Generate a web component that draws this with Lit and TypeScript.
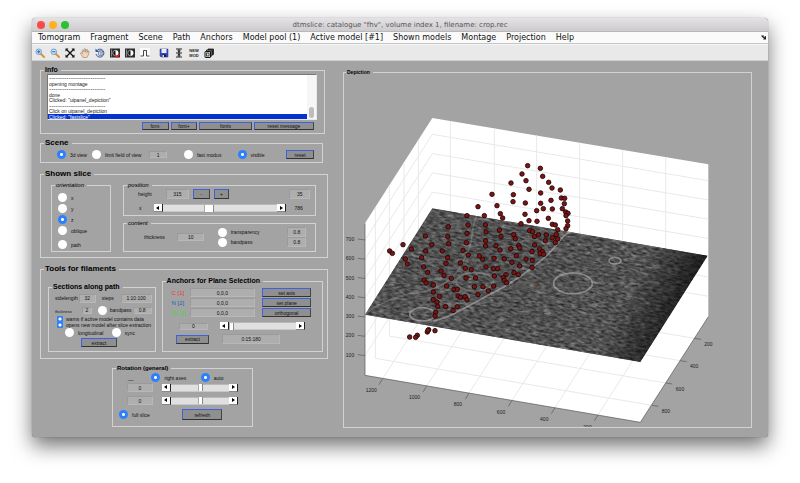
import { LitElement, html, css, svg } from "lit";
import { customElement, property } from "lit/decorators.js";
import { classMap } from "lit/directives/class-map.js";

/* Plot coordinates: three units to one pixel at the default window width. */
const POINTS: number[][] = [
  [578, 317], [616, 325], [561, 342], [623, 349], [573, 362], [641, 367], [528, 369], [651, 384],
  [676, 390], [582, 388], [617, 399], [471, 403], [535, 404], [679, 414], [689, 415], [648, 421],
  [534, 425], [571, 429], [617, 430], [688, 431], [429, 440], [486, 437], [625, 446], [652, 447],
  [682, 446], [605, 452], [570, 463], [692, 456], [699, 460], [693, 467], [396, 467], [448, 467],
  [496, 461], [503, 474], [640, 475], [582, 482], [606, 484], [698, 483], [558, 491], [652, 493],
  [661, 495], [698, 497], [399, 495], [451, 495], [693, 506], [668, 509], [340, 500], [493, 510],
  [453, 516], [396, 520], [584, 512], [593, 515], [271, 528], [338, 529], [498, 529], [536, 524],
  [541, 536], [610, 525], [598, 530], [634, 525], [664, 524], [652, 533], [668, 537], [290, 554],
  [341, 551], [394, 548], [452, 543], [452, 558], [483, 557], [551, 557], [554, 563], [527, 566],
  [495, 570], [599, 555], [631, 542], [661, 548], [204, 554], [229, 567], [272, 573], [322, 573],
  [384, 571], [400, 585], [433, 588], [443, 598], [164, 573], [172, 580], [211, 597], [217, 612],
  [260, 593], [338, 593], [333, 610], [376, 609], [391, 625], [409, 629], [453, 621], [477, 595],
  [508, 597], [544, 587], [591, 575], [614, 567], [622, 575], [615, 581], [626, 583], [573, 597],
  [592, 602], [531, 607], [554, 618], [591, 622], [475, 626], [488, 626], [537, 638], [550, 644],
  [513, 644], [478, 648], [505, 653], [508, 661], [515, 668], [266, 621], [278, 637], [318, 633],
  [327, 646], [349, 655], [393, 654], [422, 654], [267, 660], [273, 669], [295, 675], [335, 678],
  [357, 688], [367, 688], [418, 680], [444, 680], [476, 678], [460, 693], [429, 704], [295, 696],
  [313, 709], [295, 719], [306, 726], [308, 739], [332, 740], [369, 708], [376, 712], [390, 710],
  [396, 719], [367, 740], [354, 752], [302, 757], [300, 768], [300, 812], [281, 809], [277, 816],
  [279, 811], [247, 826], [242, 832], [224, 831],
];

const MENUS = [
  "Tomogram", "Fragment", "Scene", "Path", "Anchors", "Model pool (1)", "Active model [#1]",
  "Shown models", "Montage", "Projection", "Help",
];

const DASHES = "-".repeat(26);
const LOG = [
  DASHES, "opening montage", DASHES, "done", 'Clicked: "uipanel_depiction"', DASHES,
  "Click on uipanel_depiction", 'Clicked: "fastslice"',
];

const controls = css`
  * { box-sizing: border-box; }
  button, input, output { font: inherit; color: inherit; margin: 0; padding: 0; border-radius: 0; }
  button { display: grid; place-items: center; white-space: nowrap; }
`;

@customElement("scroll-slider")
class ScrollSlider extends LitElement {
  @property() label = "";
  @property({ type: Number }) value = 0;
  @property({ type: Boolean }) wide = false;

  static styles = [controls, css`
    :host { display: flex; height: 8px; min-width: 0; }
    button {
      width: 9px; flex: none; background: #fff; border: 0;
      border-right: 1px solid #222; border-bottom: 1px solid #888;
    }
    svg { width: 4px; height: 4px; display: block; }
    input {
      appearance: none; flex: 1; width: 0; min-width: 0; height: 8px; background: #e0e0e0;
      border-top: 1px solid #b8b8b8; border-bottom: 1px solid #c8c8c8;
    }
    input::-webkit-slider-thumb {
      appearance: none; width: 5px; height: 7px; background: #fff;
      border-left: 1px solid #aaa; border-right: 1px solid #888;
    }
    .wide::-webkit-slider-thumb { width: 10px; }
  `];

  render() {
    return html`
      <button aria-label="Decrease ${this.label}"><svg viewBox="0 0 4 4"><path d="M3 0v4L0 2z" /></svg></button>
      <input type="range" class=${classMap({ wide: this.wide })} aria-label=${this.label} .value=${String(this.value)} />
      <button aria-label="Increase ${this.label}"><svg viewBox="0 0 4 4"><path d="M1 0v4l3-2z" /></svg></button>`;
  }
}

@customElement("slice-plot")
class SlicePlot extends LitElement {
  static styles = css`
    :host { display: block; }
    svg { display: block; width: 100%; height: auto; overflow: hidden; }
    .wall { fill: #fff; }
    .grid { stroke: #e9e9e9; stroke-width: 3; fill: none; }
    .axis { stroke: #555; stroke-width: 2; fill: none; }
    .label { font: 15px "Liberation Sans", Arial, sans-serif; fill: #222; text-anchor: middle; }
    .dot { fill: #7c1414; stroke: #1c0606; stroke-width: 2.5; }
    .membrane { stroke: #bbb; fill: none; stroke-width: 5; opacity: 0.55; }
    .faint { opacity: 0.28; }
    .pick { stroke: #c03a20; stroke-width: 2; fill: none; }
  `;

  private line(x1: number, y1: number, x2: number, y2: number, cls: string) {
    return svg`<line class=${cls} x1=${x1} y1=${y1} x2=${x2} y2=${y2} />`;
  }

  render() {
    const levels = [0, 1, 2, 3, 4, 5, 6].map((i) => i * 57.8);
    const xs = [346, 478, 605, 734, 863, 992];
    const depth = [[250, 1078, 835], [207, 1035, 902], [163, 992, 969], [121, 950, 1036]];
    const floorLabels = ["1200", "1000", "800", "600", "400", "200"];
    const depthLabels = ["200", "400", "600", "800"];
    return html`
      <svg viewBox="27 48 1221 1053" role="img" aria-label="Depiction">
        <defs>
          <clipPath id="slice"><path d="M292 445L1118 587 916 906 90 764z" /></clipPath>
          <filter id="grain" x="0" y="0" width="1" height="1" color-interpolation-filters="sRGB">
            <feTurbulence type="fractalNoise" baseFrequency="0.06 0.17" numOctaves="3" seed="7" />
            <feColorMatrix values="0.55 0 0 0 0.04  0.55 0 0 0 0.04  0.55 0 0 0 0.04  0 0 0 0 1" />
          </filter>
          <filter id="flecks" x="0" y="0" width="1" height="1" color-interpolation-filters="sRGB">
            <feTurbulence type="fractalNoise" baseFrequency="0.03 0.07" numOctaves="3" seed="21" />
            <feColorMatrix values="0 0 0 0 0.75  0 0 0 0 0.75  0 0 0 0 0.75  4 0 0 0 -2.45" />
          </filter>
          <linearGradient id="shade" gradientUnits="userSpaceOnUse" x1="890" y1="675" x2="1035" y2="750">
            <stop offset="0" stop-opacity="0" />
            <stop offset="1" stop-opacity="0.65" />
          </linearGradient>
        </defs>
        <path class="wall" d="M90 490L292 174 1120 313V770L916 1087 90 946z" />
        ${levels.map((d) => svg`<path class="grid" d="M90 ${540 + d}L292 ${223 + d} 1120 ${362 + d}" />`)}
        ${xs.map((x) => {
          const y = 174 + (x - 292) * 0.168;
          return svg`<path class="grid" d="M${x} ${y}V${y + 456}L${x - 203} ${y + 773}" />`;
        })}
        ${depth.map(([x, rx, ry]) => svg`<path class="grid" d="M${x} ${174 + (292 - x) * 1.565}V${ry + (x - rx) * 0.17}L${rx} ${ry}" />`)}
        <path class="axis" d="M90 490V946L916 1087 1120 770" />
        ${levels.map((d) => this.line(68, 537 + d, 90, 540 + d, "axis"))}
        ${levels.map((d, i) => svg`<text class="label" x="45" y=${543 + d}>${700 - i * 100}</text>`)}
        ${xs.map((x) => {
          const y = 947 + (x - 292) * 0.168;
          return this.line(x - 203, y, x - 214, y + 18, "axis");
        })}
        ${floorLabels.map((t, i) => svg`<text class="label" x=${109 + i * 129.7} y=${995 + i * 22.2}>${t}</text>`)}
        ${depth.map(([, x, y]) => this.line(x, y, x + 20, y + 3, "axis"))}
        ${depthLabels.map((t, i) => svg`<text class="label" x=${1120 - i * 42.5} y=${858 + i * 67}>${t}</text>`)}

        <g clip-path="url(#slice)">
          <path d="M292 445L1118 587 916 906 90 764z" fill="#555" />
          <g transform="rotate(9.7 600 675)">
            <rect x="100" y="400" width="1050" height="560" filter="url(#grain)" />
            <rect x="100" y="400" width="1050" height="560" filter="url(#flecks)" opacity="0.5" />
          </g>
          <path d="M292 445L1118 587 916 906 90 764z" fill="url(#shade)" />
          <path class="membrane" d="M295 783C360 768 420 724 490 690C560 652 640 590 668 550C690 520 704 513 725 512" />
          <path class="membrane faint" d="M96 755C130 735 170 712 220 702C290 696 340 675 370 630C392 590 410 560 412 520Q414 490 428 462" />
          <path class="membrane faint" d="M560 545C590 525 620 535 645 575" />
          <ellipse class="membrane" cx="262" cy="763" rx="38" ry="20" />
          <ellipse class="membrane" cx="714" cy="670" rx="58" ry="31" />
          <ellipse class="membrane" cx="840" cy="602" rx="18" ry="10" fill="#999" />
          <ellipse class="membrane faint" cx="355" cy="711" rx="48" ry="22" />
          <ellipse class="membrane faint" cx="420" cy="665" rx="56" ry="27" />
        </g>
        <path class="pick" d="M600 676v-5h6v5" />
        ${POINTS.map(([x, y]) => svg`<circle class="dot" cx=${x} cy=${y} r="6.8" />`)}
      </svg>`;
  }
}

const icon = (body: unknown) => svg`<svg class="icon" viewBox="0 0 20 20" aria-hidden="true">${body}</svg>`;

const lens = (plus: boolean) => icon(svg`
  <path d="M11 11l7 7" stroke="#d9933c" stroke-width="4" stroke-linecap="round" />
  <circle cx="7.500" cy="7.500" r="5.500" fill="#cfe6fb" stroke="#6f9fd0" stroke-width="2" />
  <path d=${plus ? "M4.500 7.500h6M7.500 4.500v6" : "M4.500 7.500h6"} stroke="#235b9c" stroke-width="2" />`);

const contrast = (red: boolean) => icon(svg`
  <rect x="0" y="1" width="20" height="18" fill="#2b2b2b" />
  <circle cx="11" cy="10" r="5.500" fill="#111" stroke="#bbb" stroke-width="1.500" />
  <path d="M11 4.500a5.500 5.500 0 0 1 0 11z" fill="#fff" />
  <path d="M3 3v14" stroke="#aaa" stroke-width="1.500" />
  ${red ? svg`<path d="M10 14l4 4 5-6" stroke="#d22" stroke-width="3" fill="none" />` : ""}`);

const TOOLS: [string, unknown][] = [
  ["Zoom in", lens(true)],
  ["Zoom out", lens(false)],
  ["Fit view", icon(svg`<path d="M3 3l14 14M17 3L3 17" stroke="#111" stroke-width="2.500" /><path d="M1 1h6L1 7zM19 1v6l-6-6zM1 19v-6l6 6zM19 19h-6l6-6z" fill="#111" />`)],
  ["Pan", icon(svg`<path d="M6 19C4 15 1 12 1 10q2-2 4 1L4 5q1-2 3 0l1 3V2q2-2 3 0v6l2-5q2-1 2 1l-1 5 2-3q3-1 2 2-1 7-4 11z" fill="#f5d3ac" stroke="#8e7d77" stroke-width="1.200" />`)],
  ["Rotate", icon(svg`<path d="M3 6a8 8 0 1 1-1 6" fill="none" stroke="#3c5a94" stroke-width="2" /><path d="M1 1v7h7z" fill="#3c5a94" /><path d="M7 6l5-2 4 3v6l-4 3-5-2zM7 6l5 2 4-1M12 8v8" fill="#cdd8ec" stroke="#54698f" stroke-width="1.300" />`)],
  ["Contrast pick", contrast(true)],
  ["Contrast", contrast(false)],
  ["Filter", icon(svg`<rect width="20" height="20" fill="#fafafa" /><path d="M1 16h6V5h6v11h6" fill="none" stroke="#333" stroke-width="1.800" />`)],
  ["Save", icon(svg`<path d="M2 2h16v16H4l-2-2z" fill="#3a49b8" stroke="#24307f" /><rect x="5" y="2" width="10" height="8" fill="#e8ecff" /><rect x="6" y="13" width="8" height="5" fill="#11194e" /><rect x="7" y="14" width="3" height="4" fill="#dde" />`)],
  ["Align", icon(svg`<path d="M4 2h12M4 10h12M4 18h12" stroke="#222" stroke-width="2" /><path d="M10 9L6 5h8zM10 11l-4 4h8z" fill="#222" /><path d="M10 2v16" stroke="#222" stroke-width="2" />`)],
  ["New model", html`<span class="newmod">NEW<br />MOD</span>`],
  ["Layers", icon(svg`<path d="M8 2h11v11h-3V5H8z" fill="#444" stroke="#111" stroke-width="1.500" /><path d="M5 4h11v12h-3V7H5z" fill="#888" stroke="#111" stroke-width="1.500" /><rect x="2" y="7" width="11" height="12" rx="1" fill="#eee" stroke="#111" stroke-width="2" /><rect x="5" y="10" width="5" height="6" fill="#ddd" stroke="#222" stroke-width="1.500" />`)],
];

@customElement("app-root")
class AppRoot extends LitElement {
  static styles = [controls, css`
    :host {
      display: block; padding: 18px 32px 47px; background: #fff; color: #111; overflow: hidden;
      font: 5px/6px "Liberation Sans", Arial, sans-serif;
    }
    .window {
      background: #a3a3a3; border-radius: 4px 4px 3px 3px;
      box-shadow: 0 9px 20px rgba(0, 0, 0, 0.55), 0 0 1px rgba(0, 0, 0, 0.5);
    }
    .titlebar {
      height: 14px; display: grid; grid-template-columns: 1fr auto 1fr; align-items: center;
      padding: 0 5px; border-radius: 4px 4px 0 0;
      background: linear-gradient(#e4e2e4, #cdcbcd); border-bottom: 1px solid #b8b8b8;
    }
    .lights { display: flex; gap: 4px; }
    .light { width: 8px; height: 8px; border-radius: 50%; border: 0; }
    .red { background: #fc4a48; }
    .amber { background: #fdb124; }
    .green { background: #29c231; }
    .title { margin: 0; font: 7px/12px "DejaVu Sans", sans-serif; color: #555; }
    .menubar {
      display: flex; align-items: center; gap: 10px; height: 12px; padding: 0 2px 0 6px;
      background: #fafafa; border-bottom: 1px solid #c4c4c4;
      font: 8px/11px "DejaVu Sans", sans-serif; color: #111; white-space: nowrap;
    }
    .menu { border: 0; background: none; }
    .dock { border: 0; background: none; width: 5px; margin-left: auto; }
    .dock svg { display: block; width: 5px; height: 5px; }
    .toolbar {
      display: flex; gap: 5px; align-items: center; height: 17px; padding: 0 3px;
      background: #e9e9e9; border-top: 1px solid #f6f6f6; border-bottom: 1px solid #cfcfcf;
    }
    .tool { width: 10px; height: 10px; border: 0; background: none; }
    .tool:nth-child(9) { margin-left: 4px; }
    .icon { display: block; width: 10px; height: 10px; }
    .newmod { font: bold 4px/5px "Liberation Sans", Arial, sans-serif; color: #222; }

    .body {
      display: grid; grid-template-columns: minmax(0, 288fr) minmax(0, 409fr); gap: 15px;
      padding: 5px 16px 9px 8px;
    }
    fieldset { margin: 0; padding: 0; min-width: 0; border: 1px solid #d2d2d2; }
    legend { margin-left: 3px; padding: 0 3px 0 1px; font: bold 8px/8px "Liberation Sans", Arial, sans-serif; color: #000; }
    .mid > legend { font-size: 7px; }
    .small > legend { font-size: 6px; }
    .tiny > legend { font: bold 5px/7px "Liberation Sans", Arial, sans-serif; margin-left: 2px; }
    .italic > legend { font: italic 6px/6px "Liberation Sans", Arial, sans-serif; }

    .btn {
      height: 9px; background: #8f8f8f; color: #111; line-height: 6px;
      border: 1px solid; border-color: #3d62dc #444 #333 #3d62dc;
    }
    .field {
      display: block; width: 100%; height: 9px; min-width: 0; text-align: center;
      background: #aeaeae; border: 1px solid #999; border-color: #9a9a9a #b8b8b8 #b8b8b8 #9a9a9a;
    }
    .low { height: 7px; }
    .opt { display: flex; align-items: center; gap: 4px; white-space: nowrap; }
    .opt input {
      appearance: none; flex: none; width: 9px; height: 9px; border-radius: 50%; background: #fff;
    }
    .opt input:checked { background: radial-gradient(circle, #fff 1px, #2a80ff 2px); }
    .check { gap: 3px; }
    .check input { width: 6px; height: 6px; border-radius: 1px; }

    .info { margin-right: 3px; }
    .logbox { display: flex; height: 46px; margin: 0 7px 0 6px; background: #fff; border: 1px solid #777; border-color: #777 #e8e8e8 #e8e8e8 #777; }
    .log { flex: 1; margin: 0; padding: 0; list-style: none; display: grid; grid-auto-rows: minmax(0, 1fr); color: #222; }
    .log li { padding-left: 1px; white-space: nowrap; }
    .log .rule { font: 6px/6px "DejaVu Sans", sans-serif; }
    .log .current { background: #0432cf; color: #fff; }
    .track { width: 9px; background: #f6f6f6; display: flex; align-items: flex-end; justify-content: center; padding-bottom: 1px; }
    .thumb { width: 5px; height: 11px; border-radius: 3px; background: #bdbdbd; }
    .buttons { display: grid; grid-template-columns: 27fr 26fr 53fr 60fr; gap: 2px; margin: 2px 10px 3px 101px; }
    .buttons .btn { height: 8px; }

    .scene { margin: 5px 5px 0 0; }
    .scene-row { display: grid; grid-template-columns: 34fr 55fr 18fr 16fr 52fr 47fr 27fr; align-items: center; height: 15px; margin: 0 8px 0 16px; }
    .scene-row > :nth-child(4) { grid-column: 5; }

    .shown { margin-top: 7px; }
    .shown-grid { display: grid; grid-template-columns: 60fr 193fr; column-gap: 12px; row-gap: 4px; padding: 4px 11px 5px 10px; }
    .orientation { grid-row: span 2; }
    .radios { display: grid; grid-auto-rows: 11px; align-items: center; padding: 4px 0 0 6px; }
    .radios .last { margin-top: 6px; }
    .position-grid { display: grid; grid-template-columns: 24fr 24fr 17fr 16fr 53fr 21fr; column-gap: 4px; align-items: center; padding: 1px 5px 0 14px; }
    .position-grid .field, .position-grid .btn { height: 10px; }
    .position-grid > :nth-child(5) { grid-column: 6; }
    .second { display: grid; grid-template-columns: 15fr 134fr 30fr; align-items: center; padding: 5px 0 3px 15px; }
    .second output { padding-left: 9px; }
    .content-grid { display: grid; grid-template-columns: 34fr 27fr 14fr 71fr 19fr 9fr; align-items: center; padding: 1px 0 4px 20px; }
    .content-grid .pair { grid-column: 4; display: grid; grid-auto-rows: 10px; align-items: center; }
    .content-grid .field { height: 10px; }
    .content-grid .low { height: 8px; }

    .tools { margin-top: 7px; }
    .tools-grid { display: grid; grid-template-columns: 108fr 162fr; gap: 6px; align-items: end; padding: 4px 4px 6px 7px; }
    .sections-body { display: grid; padding: 2px 3px 4px 6px; }
    .row-a { display: grid; grid-template-columns: 24fr 17fr 6fr 19fr 31fr; height: 10px; align-items: center; }
    .row-a > :nth-child(3) { grid-column: 4; }
    .row-b { display: grid; grid-template-columns: 27fr 10fr 6fr 35fr 19fr; height: 10px; align-items: center; margin: 2px 0 1px; }
    .row-b > :nth-child(3) { grid-column: 4; }
    .row-b .opt { gap: 3px; }
    .clip { font-size: 4px; padding-top: 3px; overflow: hidden; }
    .indent { padding-left: 2px; height: 6px; }
    .row-e { display: grid; grid-template-columns: 47fr 40fr; padding-left: 10px; height: 9px; }
    .sections .btn { width: 36px; height: 9px; margin: 1px 0 0 26px; }

    .anchors-body { padding: 3px 11px 0 9px; }
    .anchor { display: grid; grid-template-columns: 18fr 66fr 7fr 49fr; align-items: center; margin-bottom: 1px; }
    .anchor .btn { grid-column: 4; }
    .c { color: #e33; }
    .n { color: #1766b8; }
    .w { color: #3fdc3f; }
    .name { font-size: 6px; }
    .cut { display: grid; grid-template-columns: 30fr 12fr 86fr; align-items: center; padding: 4px 6px 0 7px; }
    .cut > :nth-child(2) { grid-column: 3; }
    .extract { display: grid; grid-template-columns: 34fr 13fr 58fr; align-items: center; padding: 4px 31px 7px 4px; }
    .extract .field { grid-column: 3; height: 10px; }

    .rotation { width: 49%; margin: 5px auto 0 25%; }
    .rotation-body { display: grid; padding: 1px 14px 6px 6px; }
    .rot-head { display: grid; grid-template-columns: 33fr 50fr 38fr; height: 9px; align-items: center; }
    .rot-head span { padding-left: 9px; }
    .rot-row { display: grid; grid-template-columns: 26fr 10fr 77fr; align-items: center; padding: 1px 0 0 8px; }
    .rot-row + .rot-row { padding-top: 4px; }
    .rot-row > :nth-child(2) { grid-column: 3; }
    .rot-foot { display: grid; grid-template-columns: 64fr 41fr 16fr; align-items: center; padding-top: 4px; }
    .rot-foot .btn { height: 11px; }

    .depiction { margin-top: 3px; }
  `];

  private radio(name: string, text: string, checked = false, cls = "") {
    return html`<label class="opt ${cls}"><input type="radio" name=${name} ?checked=${checked} />${text}</label>`;
  }

  private check(text: string) {
    return html`<label class="opt check indent"><input type="checkbox" checked />${text}</label>`;
  }

  private field(label: string, value: string, low = false, id = "") {
    return html`<input type="text" id=${id || label.replace(/ /g, "-")} class=${classMap({ field: true, low })} aria-label=${label} .value=${value} />`;
  }

  private anchor(name: string, cls: string, action: string) {
    return html`<div class="anchor">
      <label class="name ${cls}" for=${"anchor-" + cls}>${name}</label>
      ${this.field("Anchor " + name, "0,0,0", false, "anchor-" + cls)}
      <button class="btn">${action}</button>
    </div>`;
  }

  render() {
    return html`
      <main class="window">
        <header class="titlebar">
          <div class="lights">
            <button class="light red" aria-label="Close"></button>
            <button class="light amber" aria-label="Minimise"></button>
            <button class="light green" aria-label="Zoom"></button>
          </div>
          <h1 class="title">dtmslice: catalogue "fhv", volume index 1, filename: crop.rec</h1>
        </header>
        <nav class="menubar">
          ${MENUS.map((m) => html`<button class="menu">${m}</button>`)}
          <button class="dock" aria-label="Dock"><svg viewBox="0 0 10 10"><path d="M0 1h6l-1 2 2 2V3l3-1v7H4l2-2-4-3z" fill="#222" /></svg></button>
        </nav>
        <div class="toolbar" role="toolbar">
          ${TOOLS.map(([name, art]) => html`<button class="tool" aria-label=${name}>${art}</button>`)}
        </div>
        <div class="body">
          <div class="panels">
            <fieldset class="info mid">
              <legend>Info</legend>
              <div class="logbox">
                <ul class="log" role="listbox" aria-label="Messages">
                  ${LOG.map((t, i) => html`<li role="option" class=${classMap({ current: i === LOG.length - 1, rule: t === DASHES })}>${t}</li>`)}
                </ul>
                <div class="track"><div class="thumb"></div></div>
              </div>
              <div class="buttons">
                <button class="btn">font-</button><button class="btn">font+</button>
                <button class="btn">fonts</button><button class="btn">reset message</button>
              </div>
            </fieldset>

            <fieldset class="scene">
              <legend>Scene</legend>
              <div class="scene-row">
                ${this.radio("view3d", "3d view", true)}
                ${this.radio("limit", "limit field of view")}
                ${this.field("field of view", "1", true)}
                ${this.radio("fast", "fast modus")}
                ${this.radio("visible", "visible", true)}
                <button class="btn">reset</button>
              </div>
            </fieldset>

            <fieldset class="shown">
              <legend>Shown slice</legend>
              <div class="shown-grid">
                <fieldset class="orientation italic">
                  <legend>orientation</legend>
                  <div class="radios">
                    ${this.radio("orient", "x")}${this.radio("orient", "y")}${this.radio("orient", "z", true)}
                    ${this.radio("orient", "oblique")}${this.radio("orient", "path", false, "last")}
                  </div>
                </fieldset>
                <fieldset class="italic">
                  <legend>position</legend>
                  <div class="position-grid">
                    <label for="height">height</label>
                    ${this.field("height", "315")}
                    <button class="btn">-</button><button class="btn">+</button>
                    ${this.field("step", "35")}
                  </div>
                  <div class="second">
                    <span>x</span>
                    <scroll-slider wide label="height" value="40"></scroll-slider>
                    <output>786</output>
                  </div>
                </fieldset>
                <fieldset class="italic">
                  <legend>content</legend>
                  <div class="content-grid">
                    <label for="thickness">thickness</label>
                    ${this.field("thickness", "10", true)}
                    <div class="pair">${this.radio("transp", "transparency")}${this.radio("band", "bandpass")}</div>
                    <div>${this.field("transparency", "0.8")}${this.field("bandpass", "0.8")}</div>
                  </div>
                </fieldset>
              </div>
            </fieldset>

            <fieldset class="tools">
              <legend>Tools for filaments</legend>
              <div class="tools-grid">
                <fieldset class="sections mid">
                  <legend>Sections along path</legend>
                  <div class="sections-body">
                    <div class="row-a">
                      <label for="sidelength">sidelength</label>${this.field("sidelength", "32")}
                      <label for="steps">steps</label>${this.field("steps", "1:10:100")}
                    </div>
                    <div class="row-b">
                      <label class="clip" for="path-thickness">thickness</label>${this.field("path thickness", "2", true)}
                      ${this.radio("pathband", "bandpass")}${this.field("path bandpass", "0.8", true)}
                    </div>
                    ${this.check("warns if active model contains data")}
                    ${this.check("opens new model after slice extraction")}
                    <div class="row-e">${this.radio("long", "longitudinal")}${this.radio("sync", "sync")}</div>
                    <button class="btn">extract</button>
                  </div>
                </fieldset>
                <fieldset class="anchors mid">
                  <legend>Anchors for Plane Selection</legend>
                  <div class="anchors-body">
                    ${this.anchor("C [1]", "c", "set axis")}
                    ${this.anchor("N [2]", "n", "set plane")}
                    ${this.anchor("W [3]", "w", "orthogonal")}
                    <div class="cut">
                      ${this.field("angle", "0", true)}
                      <scroll-slider label="angle" value="0"></scroll-slider>
                    </div>
                    <div class="extract">
                      <button class="btn">extract</button>${this.field("range", "0:15:180")}
                    </div>
                  </div>
                </fieldset>
              </div>
            </fieldset>

            <fieldset class="rotation small">
              <legend>Rotation (general)</legend>
              <div class="rotation-body">
                <div class="rot-head">
                  <span>__</span>${this.radio("axes", "right axes", true)}${this.radio("auto", "auto", true)}
                </div>
                <div class="rot-row">${this.field("azimuth", "0")}<scroll-slider label="azimuth" value="50"></scroll-slider></div>
                <div class="rot-row">${this.field("elevation", "0")}<scroll-slider label="elevation" value="50"></scroll-slider></div>
                <div class="rot-foot">${this.radio("full", "full slice", true)}<button class="btn">refresh</button></div>
              </div>
            </fieldset>
          </div>

          <fieldset class="depiction tiny">
            <legend>Depiction</legend>
            <slice-plot></slice-plot>
          </fieldset>
        </div>
      </main>`;
  }
}
